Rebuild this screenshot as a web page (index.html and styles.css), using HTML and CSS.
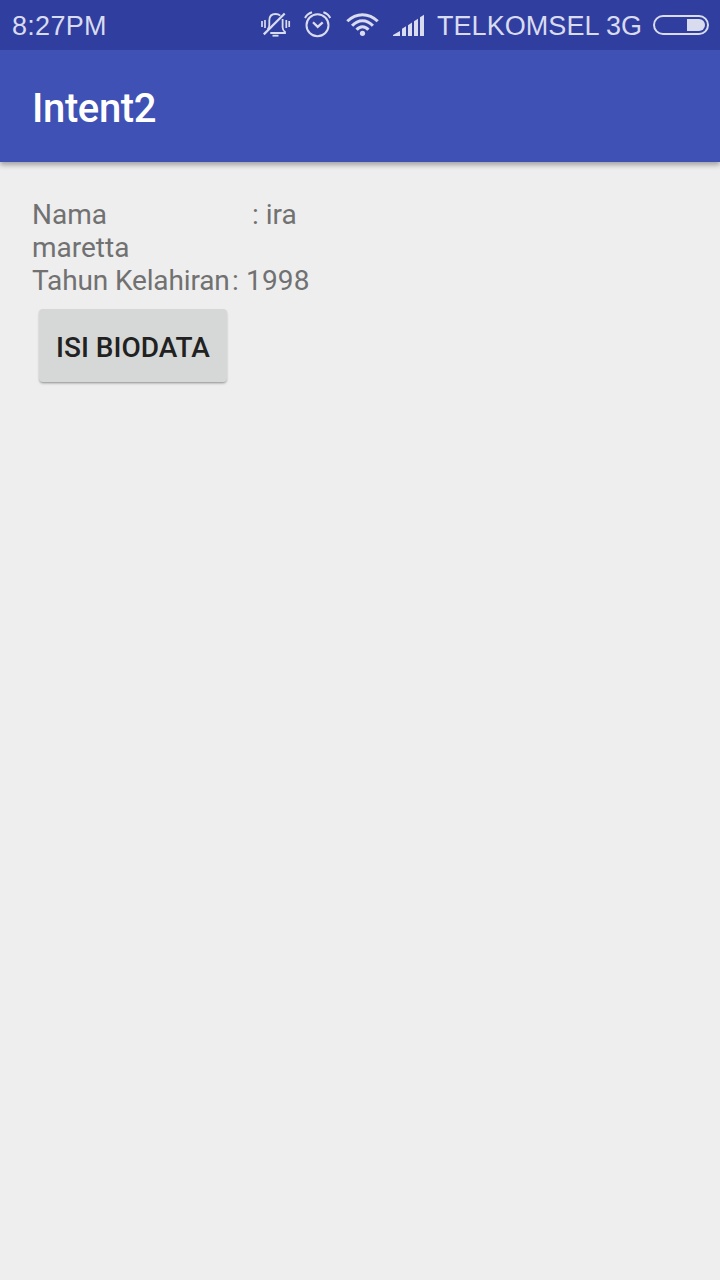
FILE: index.html
```html
<!DOCTYPE html>
<html lang="id">
<head>
<meta charset="utf-8">
<title>Intent2</title>
<link rel="stylesheet" href="styles.css">
</head>
<body>
<header class="status-bar">
  <span class="clock">8:27PM</span>
  <div class="status-icons">
    <svg class="icon icon-silent" width="30" height="50" viewBox="0 0 30 50" fill="none" stroke="currentColor" stroke-width="1.8">
      <path d="M1 21v6M4 20v8M25.3 20v8M28.2 21v6" stroke-width="1.7"/>
      <path d="M6.6 29.5Q8.3 28 8.3 25V20.5Q8.3 14 14.5 14Q17.5 14 19.3 15.6M21.6 19V27.5Q21.8 30.3 24 32V33H9.3"/>
      <path d="M2.8 34.4L23.7 13.5" stroke-width="2.2"/>
      <path d="M11.5 35.7h6" stroke-width="1.8"/>
    </svg>
    <svg class="icon icon-alarm" width="28" height="50" viewBox="0 0 28 50" fill="none" stroke="currentColor" stroke-width="2">
      <circle cx="13.5" cy="25.3" r="11"/>
      <path d="M9 22.3l4.7 4.6 5-4.6" stroke-width="2.3"/>
      <path d="M1 18Q3 14 8 12.3M26.2 18Q24.4 14 19.4 12.3"/>
    </svg>
    <svg class="icon icon-wifi" width="34" height="50" viewBox="0 0 34 50" fill="none" stroke="currentColor" stroke-width="3">
      <path d="M1.3 21.3Q8 14.7 16.5 14.7T31.7 21.3"/>
      <path d="M6.1 25.8Q10.7 20.7 16.5 20.7T26.9 25.8"/>
      <path d="M10.6 29.8Q13.1 26.7 16.5 26.7T22.4 29.8"/>
      <circle cx="16.5" cy="33.3" r="2.6" fill="currentColor" stroke="none"/>
    </svg>
    <svg class="icon icon-signal" width="32" height="50" viewBox="0 0 32 50" fill="currentColor">
      <path d="M0 36v-1l7-4v5zM9 36v-7.3l4-2.4V36zM15 36V25.2l4-2.6V36zM21 36V21.3l4-2.6V36zM27 36V17.2l4-2.4V36z"/>
    </svg>
    <span class="carrier">TELKOMSEL 3G</span>
    <svg class="icon icon-battery" width="56" height="50" viewBox="0 0 56 50" fill="none" stroke="currentColor" stroke-width="2">
      <rect x="1" y="16" width="54" height="18" rx="9"/>
      <path d="M34 19h12a6 6 0 0 1 0 12H34z" fill="currentColor" stroke="none"/>
    </svg>
  </div>
</header>
<div class="app-bar"><h1 class="title">Intent2</h1></div>
<main class="content">
  <p class="biodata"><span class="label-name">Nama</span>: ira<br>maretta<br><span class="label-year">Tahun Kelahiran</span><span class="year">: 1998</span></p>
  <button class="button" type="button">ISI BIODATA</button>
</main>
</body>
</html>
```
FILE: styles.css
```css
body {
  margin: 0;
  min-height: 1280px;
  background: #eeeeee;
  font-family: Roboto, sans-serif;
}
.status-bar {
  display: flex;
  justify-content: space-between;
  height: 50px;
  padding: 0 11px 0 12px;
  box-sizing: border-box;
  background: #303f9f;
  color: #d9dbef;
  font: 27px/52px "Liberation Sans", Arial, sans-serif;
  white-space: nowrap;
}
.clock {
  letter-spacing: 0.3px;
}
.status-icons {
  display: flex;
}
.icon {
  display: block;
  flex: none;
}
.icon-alarm {
  margin-left: 13px;
}
.icon-wifi {
  margin-left: 14px;
}
.icon-signal {
  margin-left: 13px;
}
.carrier {
  width: 205px;
  margin-left: 12px;
  letter-spacing: 0.05px;
}
.icon-battery {
  margin-left: 11px;
}
.app-bar {
  display: flex;
  align-items: center;
  height: 112px;
  padding: 0 32px;
  box-sizing: border-box;
  background: #3f51b5;
  box-shadow: 0 3px 5px rgba(0, 0, 0, 0.32);
  clip-path: inset(0 0 -12px);
}
.title {
  margin: 6px 0 0;
  color: #ffffff;
  font-size: 40px;
  font-weight: 500;
  letter-spacing: -0.35px;
  line-height: 48px;
}
.content {
  padding: 36px 32px;
}
.biodata {
  margin: 0;
  color: #717171;
  font-size: 28px;
  line-height: 33px;
}
.label-name,
.label-year {
  display: inline-block;
}
.label-name {
  width: 220px;
}
.label-year {
  width: 200px;
  letter-spacing: -0.13px;
}
.year {
  letter-spacing: 0.15px;
}
.button {
  display: block;
  width: 188px;
  height: 73px;
  margin: 12px 0 0 7px;
  padding: 3px 0 0;
  border: 0;
  border-radius: 4px;
  background: #d6d7d7;
  box-shadow: 0 2px 3px -1px rgba(0, 0, 0, 0.35), 0 1px 2px rgba(0, 0, 0, 0.1);
  color: #212121;
  font: 500 28px/33px Roboto, sans-serif;
  white-space: nowrap;
}
```
